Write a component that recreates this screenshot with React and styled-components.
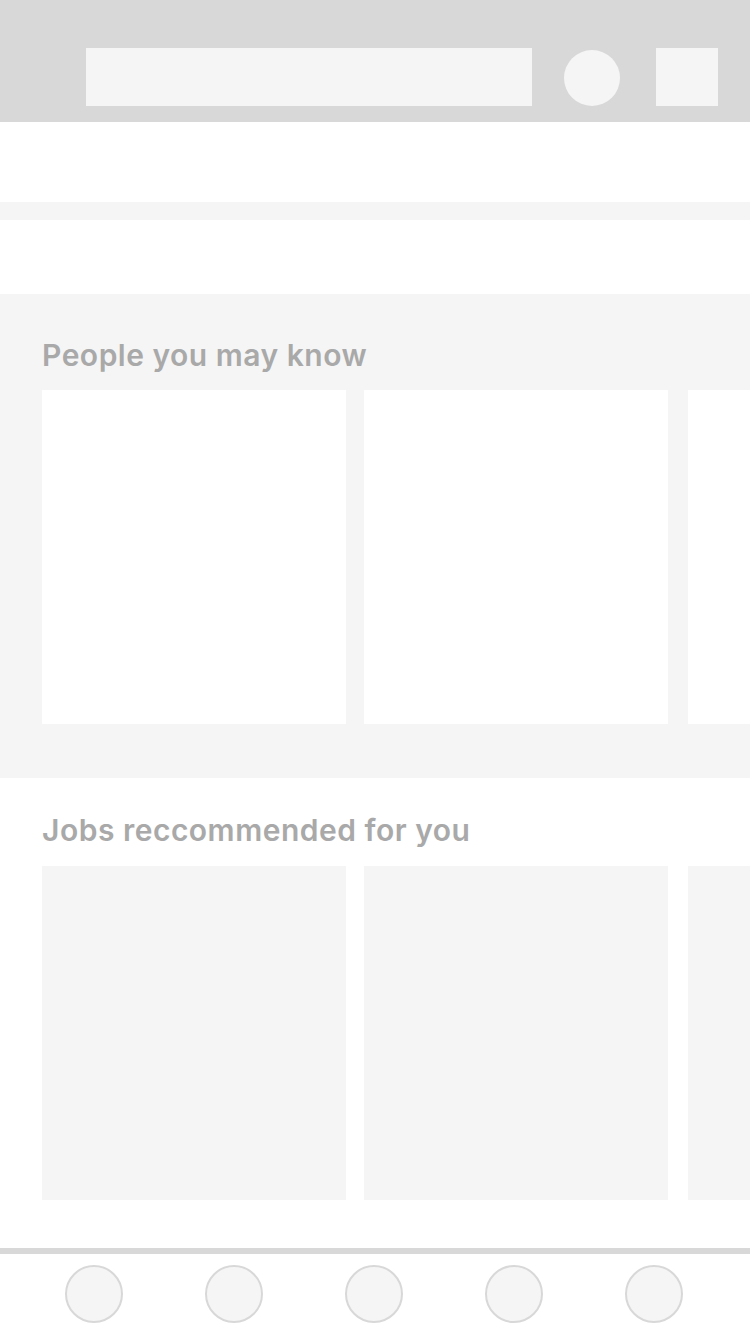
import React from "react";
import styled, { createGlobalStyle } from "styled-components";

const GlobalStyle = createGlobalStyle`
  html, body {
    margin: 0;
    padding: 0;
    background: #ffffff;
  }
  body {
    font-family: "Inter", "Liberation Sans", sans-serif;
  }
`;

const Page = styled.div`
  width: 750px;
  height: 1334px;
  display: flex;
  flex-direction: column;
  overflow: hidden;
  background: #ffffff;
`;

const Header = styled.header`
  height: 122px;
  flex-shrink: 0;
  background: #d8d8d8;
  box-sizing: border-box;
  padding: 48px 32px 16px 86px;
  display: flex;
  align-items: flex-start;
`;

const SearchBar = styled.div`
  width: 446px;
  height: 58px;
  background: #f5f5f5;
`;

const Avatar = styled.div`
  width: 56px;
  height: 56px;
  margin: 2px 0 0 32px;
  border-radius: 50%;
  background: #f5f5f5;
`;

const MenuBox = styled.div`
  width: 62px;
  height: 58px;
  margin-left: 36px;
  background: #f5f5f5;
`;

const Strip = styled.div`
  height: ${(p) => p.h}px;
  flex-shrink: 0;
  background: ${(p) => p.bg};
`;

const Main = styled.main`
  flex: 1;
  min-height: 0;
  display: flex;
  flex-direction: column;
`;

const Section = styled.section`
  background: ${(p) => p.bg};
  padding: ${(p) => p.pad};
  display: flex;
  flex-direction: column;
`;

const Title = styled.h2`
  margin: 0 0 0 42px;
  font-size: 30px;
  line-height: 36px;
  font-weight: 600;
  color: #a9a9a9;
  letter-spacing: 0.5px;
`;

const CardRow = styled.div`
  margin-top: ${(p) => p.top}px;
  padding-left: 42px;
  display: flex;
  gap: 18px;
  overflow: hidden;

  & > div:nth-child(3) {
    margin-left: 2px;
  }
`;

const Card = styled.div`
  flex: 0 0 304px;
  height: 334px;
  background: ${(p) => p.bg};
`;

const BottomNav = styled.nav`
  height: 86px;
  flex-shrink: 0;
  box-sizing: border-box;
  border-top: 6px solid #d8d8d8;
  display: flex;
  align-items: center;
  padding-left: 65px;
  gap: 82px;
`;

const NavDot = styled.div`
  width: 54px;
  height: 54px;
  border-radius: 50%;
  border: 2px solid #d8d8d8;
  background: #f5f5f5;
`;

function CardSection({ title, bg, cardBg, pad, gapTop }) {
  return (
    <Section bg={bg} pad={pad}>
      <Title>{title}</Title>
      <CardRow top={gapTop}>
        {[0, 1, 2].map((i) => (
          <Card key={i} bg={cardBg} />
        ))}
      </CardRow>
    </Section>
  );
}

export default function App() {
  return (
    <>
      <GlobalStyle />
      <Page>
        <Header>
          <SearchBar />
          <Avatar />
          <MenuBox />
        </Header>
        <Main>
          <Strip h={80} bg="#ffffff" />
          <Strip h={18} bg="#f5f5f5" />
          <Strip h={74} bg="#ffffff" />
          <CardSection
            title="People you may know"
            bg="#f5f5f5"
            cardBg="#ffffff"
            pad="43px 0 54px"
            gapTop={17}
          />
          <CardSection
            title="Jobs reccommended for you"
            bg="#ffffff"
            cardBg="#f5f5f5"
            pad="34px 0 48px"
            gapTop={18}
          />
        </Main>
        <BottomNav>
          {[0, 1, 2, 3, 4].map((i) => (
            <NavDot key={i} />
          ))}
        </BottomNav>
      </Page>
    </>
  );
}
